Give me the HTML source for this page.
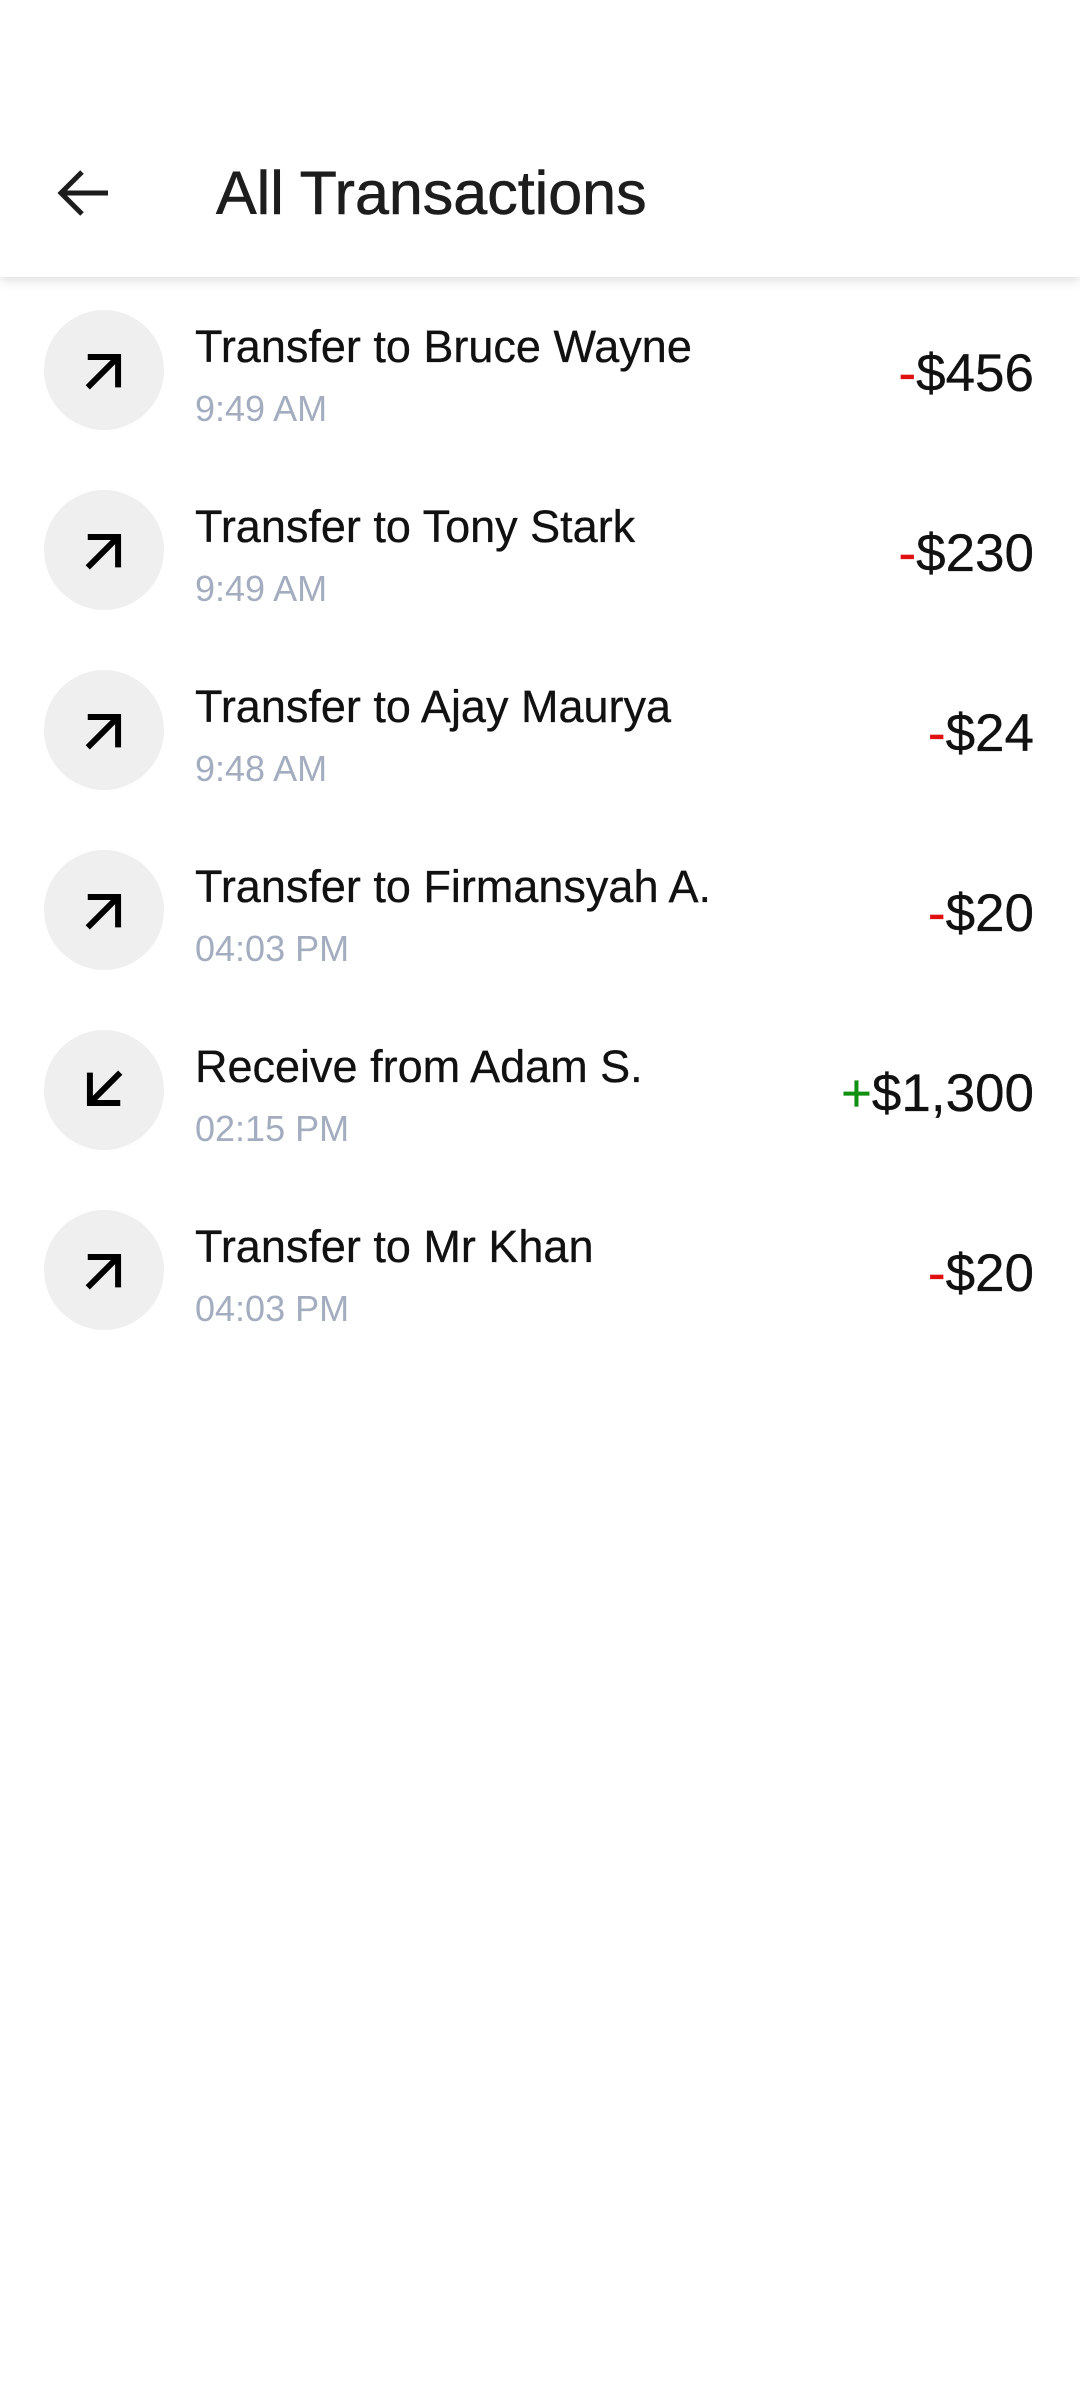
<!DOCTYPE html>
<html><head><meta charset="utf-8"><style>
*{margin:0;padding:0;box-sizing:border-box}
body{width:1080px;height:2400px;background:#fff;font-family:"Liberation Sans",sans-serif;position:relative;overflow:hidden}
.hdr{position:absolute;top:0;left:0;width:1080px;height:277px;background:#fff;box-shadow:0 4px 10px rgba(0,0,0,0.12)}
.title{position:absolute;left:216px;top:158px;font-size:61px;color:#1d1d1d;line-height:70px;-webkit-text-stroke:0.6px #1d1d1d}
.back{position:absolute;left:56px;top:168px}
.row{position:absolute;left:0;width:1080px;height:120px}
.circ{position:absolute;left:44px;top:0;width:120px;height:120px;border-radius:50%;background:#efefef}
.circ svg{position:absolute;left:34px;top:34px}
.name{position:absolute;left:195px;top:10px;font-size:45px;color:#111;line-height:54px;-webkit-text-stroke:0.3px #111}
.time{position:absolute;left:195px;top:78px;font-size:36px;color:#a3adbf;line-height:42px}
.amt{position:absolute;right:46px;top:34px;font-size:53px;color:#111;line-height:60px;-webkit-text-stroke:0.3px #111}
.r{color:#e01010;-webkit-text-stroke:0.3px #e01010}.g{color:#109010;-webkit-text-stroke:0.3px #109010}
</style></head><body>
<div class="hdr">
<svg class="back" width="56" height="50" viewBox="0 0 56 50"><path d="M52 25H6M26 4L5 25l21 21" fill="none" stroke="#1d1d1d" stroke-width="5"/></svg>
<div class="title">All Transactions</div>
</div>

<div class="row" style="top:310px"><div class="circ"><svg width="52" height="52" viewBox="0 0 48 48"><path d="M9 40L37 12M9 12h28v28" fill="none" stroke="#000" stroke-width="5.5"/></svg></div><div class="name">Transfer to Bruce Wayne</div><div class="time">9:49 AM</div><div class="amt"><span class="r">-</span>$456</div></div>

<div class="row" style="top:490px"><div class="circ"><svg width="52" height="52" viewBox="0 0 48 48"><path d="M9 40L37 12M9 12h28v28" fill="none" stroke="#000" stroke-width="5.5"/></svg></div><div class="name">Transfer to Tony Stark</div><div class="time">9:49 AM</div><div class="amt"><span class="r">-</span>$230</div></div>

<div class="row" style="top:670px"><div class="circ"><svg width="52" height="52" viewBox="0 0 48 48"><path d="M9 40L37 12M9 12h28v28" fill="none" stroke="#000" stroke-width="5.5"/></svg></div><div class="name">Transfer to Ajay Maurya</div><div class="time">9:48 AM</div><div class="amt"><span class="r">-</span>$24</div></div>

<div class="row" style="top:850px"><div class="circ"><svg width="52" height="52" viewBox="0 0 48 48"><path d="M9 40L37 12M9 12h28v28" fill="none" stroke="#000" stroke-width="5.5"/></svg></div><div class="name">Transfer to Firmansyah A.</div><div class="time">04:03 PM</div><div class="amt"><span class="r">-</span>$20</div></div>

<div class="row" style="top:1030px"><div class="circ"><svg width="52" height="52" viewBox="0 0 48 48"><path d="M39 8L11 36M11 8v28h28" fill="none" stroke="#000" stroke-width="5.5"/></svg></div><div class="name">Receive from Adam S.</div><div class="time">02:15 PM</div><div class="amt"><span class="g">+</span>$1,300</div></div>

<div class="row" style="top:1210px"><div class="circ"><svg width="52" height="52" viewBox="0 0 48 48"><path d="M9 40L37 12M9 12h28v28" fill="none" stroke="#000" stroke-width="5.5"/></svg></div><div class="name">Transfer to Mr Khan</div><div class="time">04:03 PM</div><div class="amt"><span class="r">-</span>$20</div></div>
</body></html>
